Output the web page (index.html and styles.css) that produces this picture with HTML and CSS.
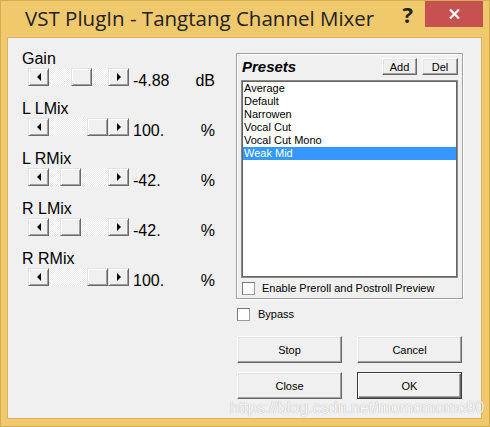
FILE: index.html
```
<!DOCTYPE html>
<html>
<head>
<meta charset="utf-8">
<link rel="stylesheet" href="styles.css">
</head>
<body>
<div class="window">
  <div class="titlebar">
    <span class="title">VST PlugIn - Tangtang Channel Mixer</span>
    <span class="help">?</span>
    <span class="close"><svg width="11" height="10" viewBox="0 0 11 10"><path d="M1 0.5 L10 9.5 M10 0.5 L1 9.5" stroke="#fff" stroke-width="2.2" fill="none"/></svg></span>
  </div>
  <div class="client">
    <div class="sliders">
      <div class="param">
        <div class="plabel">Gain</div>
        <div class="ctrl">
          <div class="sbar">
            <span class="sbtn"><i class="arr-l"></i></span>
            <span class="track"><span class="thumb" style="margin-left:22px"></span></span>
            <span class="sbtn"><i class="arr-r"></i></span>
          </div>
          <span class="val">-4.88</span>
          <span class="unit">dB</span>
        </div>
      </div>
      <div class="param">
        <div class="plabel">L LMix</div>
        <div class="ctrl">
          <div class="sbar">
            <span class="sbtn"><i class="arr-l"></i></span>
            <span class="track"><span class="thumb" style="margin-left:38px"></span></span>
            <span class="sbtn"><i class="arr-r"></i></span>
          </div>
          <span class="val">100.</span>
          <span class="unit">%</span>
        </div>
      </div>
      <div class="param">
        <div class="plabel">L RMix</div>
        <div class="ctrl">
          <div class="sbar">
            <span class="sbtn"><i class="arr-l"></i></span>
            <span class="track"><span class="thumb" style="margin-left:11px"></span></span>
            <span class="sbtn"><i class="arr-r"></i></span>
          </div>
          <span class="val">-42.</span>
          <span class="unit">%</span>
        </div>
      </div>
      <div class="param">
        <div class="plabel">R LMix</div>
        <div class="ctrl">
          <div class="sbar">
            <span class="sbtn"><i class="arr-l"></i></span>
            <span class="track"><span class="thumb" style="margin-left:11px"></span></span>
            <span class="sbtn"><i class="arr-r"></i></span>
          </div>
          <span class="val">-42.</span>
          <span class="unit">%</span>
        </div>
      </div>
      <div class="param">
        <div class="plabel">R RMix</div>
        <div class="ctrl">
          <div class="sbar">
            <span class="sbtn"><i class="arr-l"></i></span>
            <span class="track"><span class="thumb" style="margin-left:38px"></span></span>
            <span class="sbtn"><i class="arr-r"></i></span>
          </div>
          <span class="val">100.</span>
          <span class="unit">%</span>
        </div>
      </div>
    </div>
    <div class="side">
      <div class="group">
        <div class="ghead">
          <span class="gtitle">Presets</span>
          <span class="btn small add">Add</span>
          <span class="btn small del">Del</span>
        </div>
        <div class="list">
          <div class="item">Average</div>
          <div class="item">Default</div>
          <div class="item">Narrowen</div>
          <div class="item">Vocal Cut</div>
          <div class="item">Vocal Cut Mono</div>
          <div class="item sel">Weak Mid</div>
        </div>
        <div class="check inner">
          <span class="box"></span>
          <span class="ctext">Enable Preroll and Postroll Preview</span>
        </div>
      </div>
      <div class="check bypass">
        <span class="box"></span>
        <span class="ctext">Bypass</span>
      </div>
      <div class="btns">
        <span class="btn big">Stop</span>
        <span class="btn big">Cancel</span>
        <span class="btn big">Close</span>
        <span class="btn big default">OK</span>
      </div>
    </div>
  </div>
  <div class="watermark">https://blog.csdn.net/momomomo90</div>
</div>
</body>
</html>
```
FILE: styles.css
```
* { box-sizing: border-box; }
html, body { margin: 0; padding: 0; }
body { width: 490px; height: 427px; overflow: hidden; font-family: "Liberation Sans", Arial, sans-serif; }

.window {
  position: relative;
  width: 490px;
  height: 427px;
  background: #f1c96d;
  border: 1px solid #d6ab52;
}

.titlebar {
  height: 36px;
  display: flex;
  align-items: flex-start;
}
.title {
  font-family: "Open Sans", sans-serif;
  font-size: 20.5px;
  line-height: 27px;
  color: #222;
  padding-left: 24px;
  margin-top: 4px;
  flex: 1;
  white-space: nowrap;
}
.help {
  font-family: "Open Sans", sans-serif;
  font-weight: bold;
  font-size: 22px;
  line-height: 26px;
  color: #222;
  margin-right: 12px;
}
.close {
  width: 58px;
  height: 26px;
  margin-right: 6px;
  background: #c75050;
  display: flex;
  align-items: center;
  justify-content: center;
}

.client {
  margin: 0 7px 0 6px;
  height: 382px;
  border: 1px solid #d9b45e;
  background: #f0f0f0;
  display: flex;
}

.sliders {
  width: 228px;
  padding-top: 13px;
}
.param { height: 50px; }
.plabel {
  font-size: 16px;
  line-height: 16px;
  padding-left: 14px;
  margin-bottom: 1px;
  color: #000;
}
.ctrl {
  display: flex;
  align-items: flex-start;
  margin-left: 20px;
  width: 187px;
  font-size: 16px;
  line-height: 18px;
  color: #000;
}
.sbar {
  display: flex;
  width: 101px;
  height: 18px;
}
.sbtn, .thumb {
  width: 21px;
  height: 18px;
  background: #f0f0f0;
  border: 1px solid;
  border-color: #e3e3e3 #696969 #696969 #e3e3e3;
  box-shadow: inset 1px 1px 0 #fff, inset -1px -1px 0 #a0a0a0;
  display: flex;
  align-items: center;
  justify-content: center;
  flex: none;
}
.track {
  flex: 1;
  display: flex;
  background: repeating-conic-gradient(#ffffff 0 25%, #ececec 0 50%) 0 0 / 2px 2px;
}
.arr-l {
  width: 0; height: 0;
  border-top: 4px solid transparent;
  border-bottom: 4px solid transparent;
  border-right: 4px solid #000;
}
.arr-r {
  width: 0; height: 0;
  border-top: 4px solid transparent;
  border-bottom: 4px solid transparent;
  border-left: 4px solid #000;
}
.val {
  margin-left: 4px;
  padding-top: 4px;
  flex: 1;
}
.unit {
  padding-top: 4px;
}

.side {
  width: 227px;
  padding-top: 15px;
}
.group {
  height: 246px;
  border: 1px solid #a0a0a0;
  box-shadow: inset 1px 1px 0 #fff, 1px 1px 0 #fff;
  padding: 4px 4px 0 4px;
}
.ghead {
  display: flex;
  align-items: center;
  height: 17px;
}
.gtitle {
  flex: 1;
  font-weight: bold;
  font-style: italic;
  font-size: 15px;
  line-height: 17px;
  padding-left: 1px;
  color: #000;
}
.btn {
  display: flex;
  align-items: center;
  justify-content: center;
  background: #f0f0f0;
  border: 1px solid;
  border-color: #fff #696969 #696969 #fff;
  box-shadow: inset -1px -1px 0 #a0a0a0, inset 1px 1px 0 #e3e3e3;
  font-size: 11px;
  color: #000;
}
.small { height: 17px; }
.add { width: 35px; margin-right: 5px; }
.del { width: 36px; }

.list {
  margin-top: 5px;
  height: 198px;
  background: #fff;
  border: 1px solid #8a8a8a;
  box-shadow: inset 0 0 0 1px #646464;
  padding: 1px;
}
.item {
  font-size: 11px;
  line-height: 13px;
  padding-left: 1px;
  color: #000;
  white-space: nowrap;
}
.item.sel {
  background: #3399ff;
  color: #fff;
}

.check {
  display: flex;
  align-items: center;
  height: 13px;
  font-size: 11px;
  line-height: 13px;
  color: #000;
}
.check.inner { margin-top: 4px; margin-left: 1px; }
.box {
  width: 13px;
  height: 13px;
  background: #fff;
  border: 1px solid;
  border-color: #7a7a7a #9a9a9a #9a9a9a #7a7a7a;
  flex: none;
}
.check.inner .ctext { margin-left: 7px; }
.check.bypass { margin-top: 9px; margin-left: 1px; }
.check.bypass .ctext { margin-left: 8px; }

.btns {
  margin-top: 15px;
  margin-left: 1px;
  display: grid;
  grid-template-columns: 105px 105px;
  column-gap: 15px;
  row-gap: 9px;
}
.big { height: 27px; }
.btn.default {
  border: 1px solid #3c3c3c;
  box-shadow: inset 1px 1px 0 #fff, inset -1px -1px 0 #696969, inset -2px -2px 0 #a0a0a0;
}

.watermark {
  position: absolute;
  left: 229px;
  top: 398px;
  font-size: 16px;
  line-height: 18px;
  color: rgba(255, 255, 255, 0.9);
  text-shadow: 0 0 1px rgba(0, 0, 0, 0.35);
  white-space: nowrap;
  pointer-events: none;
}
```
